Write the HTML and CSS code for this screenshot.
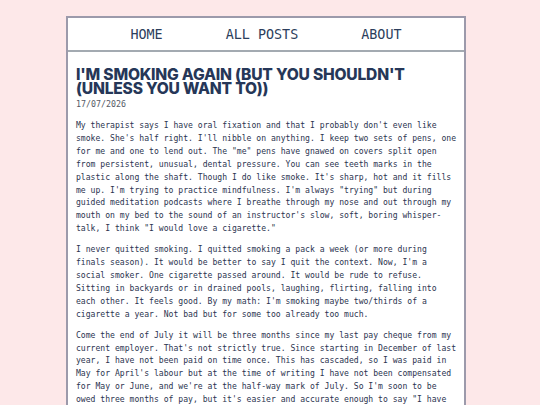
FILE: index.html
```html
<!DOCTYPE html>
<html>
<head>
<meta charset="utf-8">
<link rel="stylesheet" href="styles.css">
</head>
<body>
<div class="page">
  <nav class="nav">
    <a class="nav-link" href="#">HOME</a>
    <a class="nav-link" href="#">ALL POSTS</a>
    <a class="nav-link" href="#">ABOUT</a>
  </nav>
  <article class="post">
    <h1 class="post-title">I'M SMOKING AGAIN (BUT YOU SHOULDN'T (UNLESS YOU WANT TO))</h1>
    <div class="post-date">17/07/2026</div>
    <p class="post-para">My therapist says I have oral fixation and that I probably don't even like smoke. She's half right. I'll nibble on anything. I keep two sets of pens, one for me and one to lend out. The "me" pens have gnawed on covers split open from persistent, unusual, dental pressure. You can see teeth marks in the plastic along the shaft. Though I do like smoke. It's sharp, hot and it fills me up. I'm trying to practice mindfulness. I'm always "trying" but during guided meditation podcasts where I breathe through my nose and out through my mouth on my bed to the sound of an instructor's slow, soft, boring whisper-talk, I think "I would love a cigarette."</p>
    <p class="post-para">I never quitted smoking. I quitted smoking a pack a week (or more during finals season). It would be better to say I quit the context. Now, I'm a social smoker. One cigarette passed around. It would be rude to refuse. Sitting in backyards or in drained pools, laughing, flirting, falling into each other. It feels good. By my math: I'm smoking maybe two/thirds of a cigarette a year. Not bad but for some too already too much.</p>
    <p class="post-para">Come the end of July it will be three months since my last pay cheque from my current employer. That's not strictly true. Since starting in December of last year, I have not been paid on time once. This has cascaded, so I was paid in May for April's labour but at the time of writing I have not been compensated for May or June, and we're at the half-way mark of July. So I'm soon to be owed three months of pay, but it's easier and accurate enough to say "I have not been paid in three months."</p>
  </article>
</div>
</body>
</html>
```
FILE: styles.css
```css
html, body {
  margin: 0;
  padding: 0;
  background: #fde8e9;
  height: 100%;
  overflow: hidden;
}
.page {
  margin: 16px 0 0 66px;
  width: 396px;
  background: #ffffff;
  border: 2px solid #9c9aab;
  border-bottom: none;
  min-height: 600px;
}
.nav {
  display: flex;
  justify-content: center;
  gap: 63px;
  height: 32px;
  align-items: center;
  border-bottom: 2px solid #a3aab1;
}
.nav-link {
  font-family: "DejaVu Sans Mono", monospace;
  font-size: 13.4px;
  color: #2c3e5c;
  text-decoration: none;
}
.post {
  padding: 16px 4px 0 8px;
}
.post-title {
  margin: 0;
  font-family: Inter, "Open Sans", sans-serif;
  font-weight: 800;
  font-size: 15.6px;
  line-height: 14px;
  color: #263758;
  letter-spacing: -0.2px;
}
.post-date {
  font-family: "DejaVu Sans Mono", monospace;
  font-size: 8.3px;
  color: #555a66;
  margin-top: 3px;
  line-height: 10px;
}
.post-para {
  font-family: "DejaVu Sans Mono", monospace;
  font-size: 8.1px;
  line-height: 12.9px;
  color: #2c3450;
  margin: 8px 0 0 0;
}
.post-date + .post-para {
  margin-top: 10px;
}
```
